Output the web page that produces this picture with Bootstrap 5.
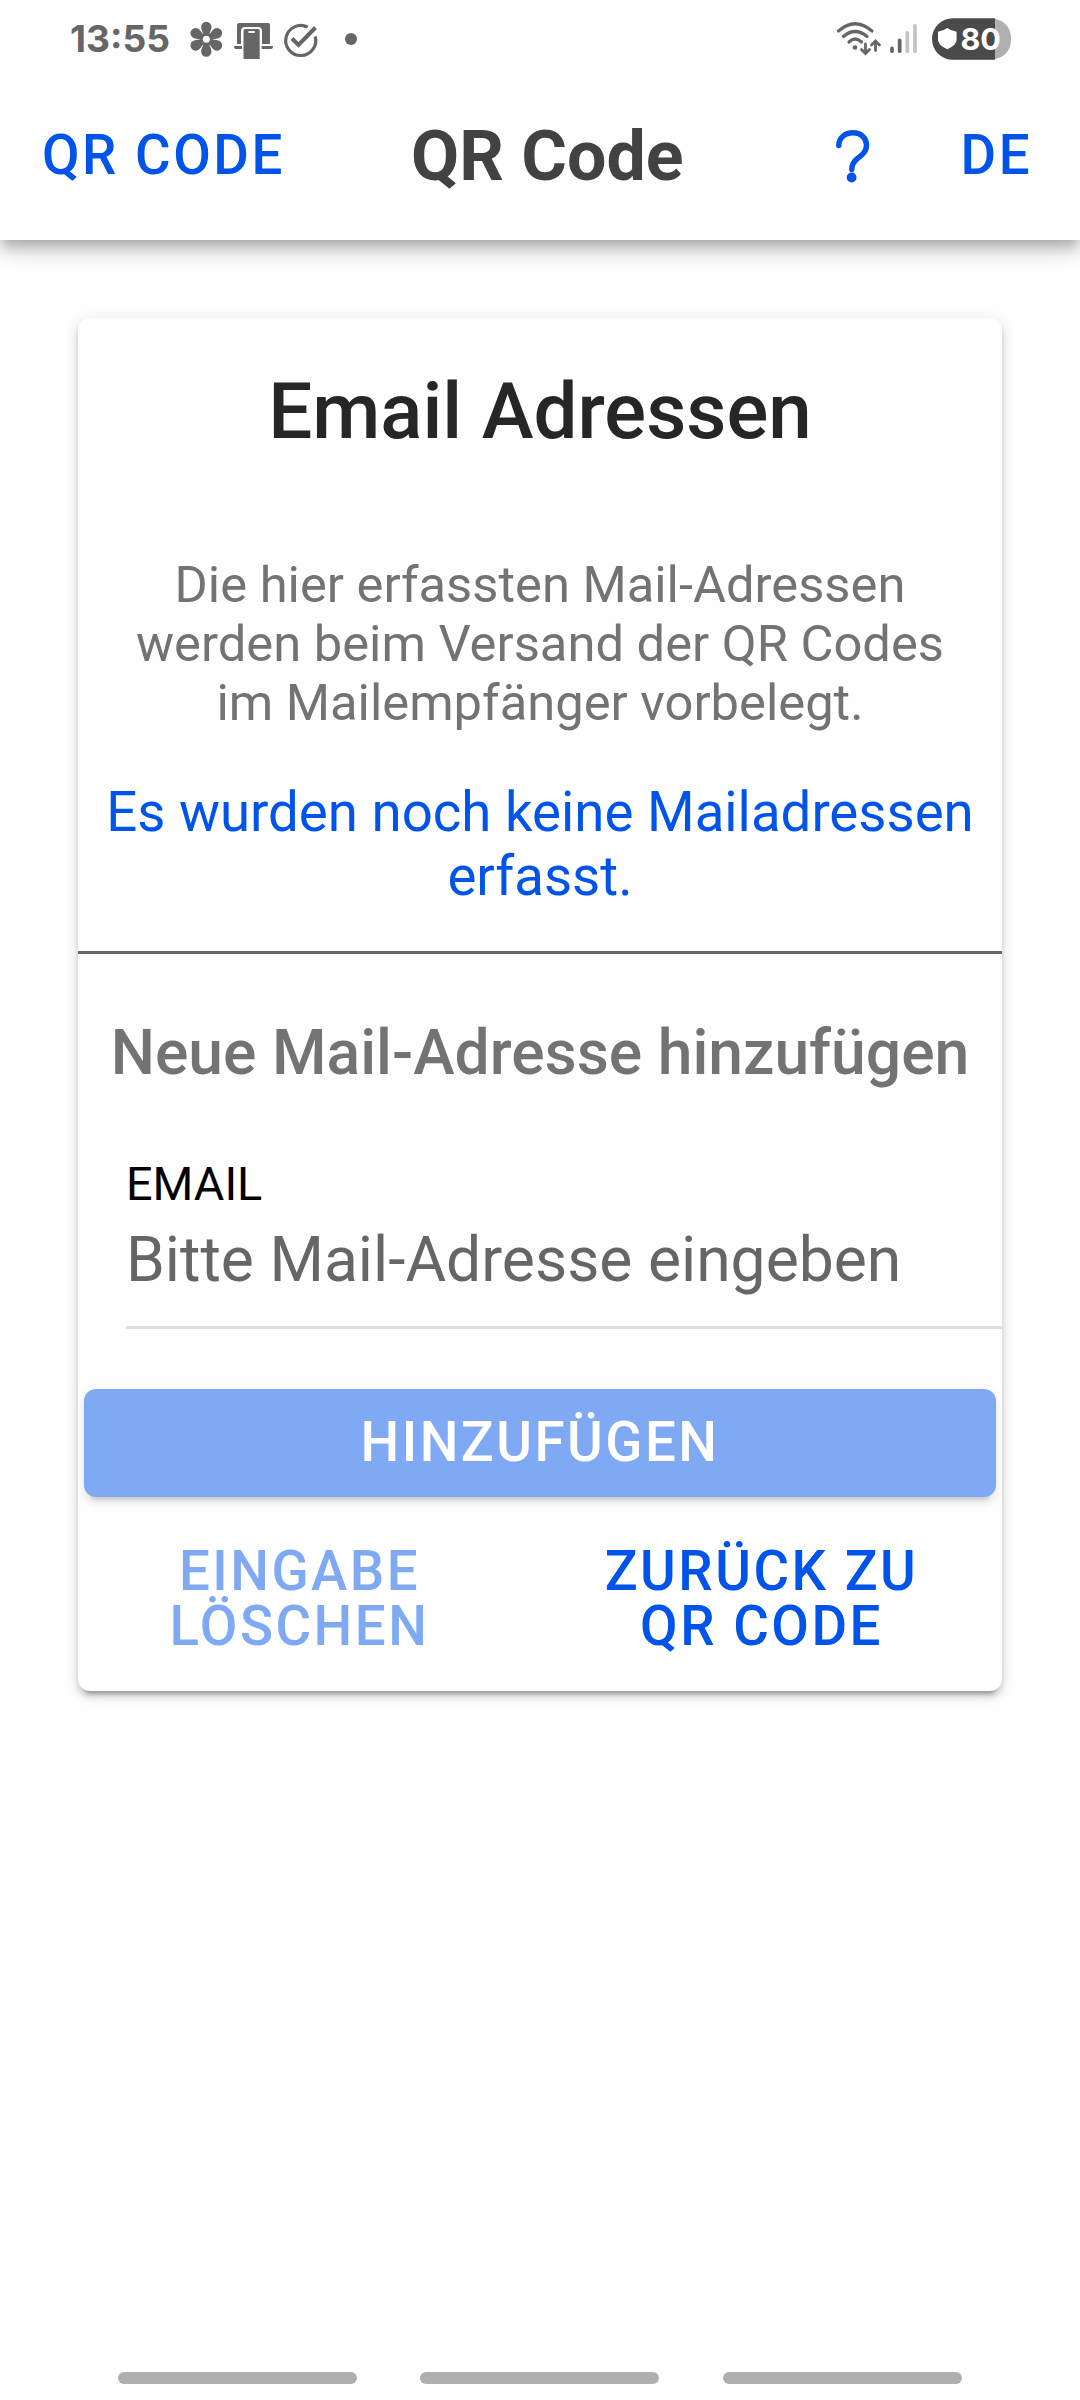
<!DOCTYPE html>
<html lang="de">
<head>
<meta charset="utf-8">
<meta name="viewport" content="width=device-width, initial-scale=1">
<title>QR Code</title>
<link href="https://cdn.jsdelivr.net/npm/bootstrap@5.3.0/dist/css/bootstrap.min.css" rel="stylesheet">
<style>
:root{--blue:#0054e9}
html,body{background:#fefefe}
body{font-family:Roboto,sans-serif;height:2400px;overflow:hidden;color:#737373}
.status-row{height:72px;padding:0 69px 0 70px;color:#666}
.clock{font:700 37.2px/72px Inter,sans-serif;width:113px;margin-top:3px}
.topbar{background:#fefefe;box-shadow:0 6px 12px -3px rgba(0,0,0,.2),0 12px 15px 0 rgba(0,0,0,.14),0 3px 30px 0 rgba(0,0,0,.12)}
.tool-row{height:168px;padding:0 48px 0 42px}
.tool-row .btn{padding-bottom:2px}
.btn.flat{font-weight:500;font-size:54.6px;line-height:55px;letter-spacing:2.5px;color:var(--blue);border:0;padding:0;border-radius:0;white-space:nowrap}
.tool-row .btn.flat{padding-bottom:2px}
.btn.flat:disabled{color:#80a9f4;opacity:1}
.app-title{font-size:69.9px;line-height:84px;font-weight:700;color:#424242;margin:0}
.panel{margin:78px 78px 0;height:1373px;border:0;border-radius:12px;background:#fefefe;box-shadow:0 9px 3px -6px rgba(0,0,0,.2),0 6px 6px 0 rgba(0,0,0,.14),0 3px 15px 0 rgba(0,0,0,.12);padding-top:47px}
.panel h1{font-size:78.1px;line-height:94px;font-weight:500;color:#262626;margin:0}
.intro{font-size:50.7px;line-height:59px;margin:96px 0 0}
.notice{font-size:54.6px;line-height:64px;color:var(--blue);margin:48px 0 43px}
.rule{height:3px;background:#66646b}
.panel h2{font-size:62.4px;line-height:76px;font-weight:500;margin:61px 0 63px;white-space:nowrap}
.field{margin-left:48px;border-bottom:3px solid #dedede;height:175px}
.field label{display:block;font-size:46.8px;line-height:60px;color:#000}
.field input{font-size:62.4px;line-height:74px;height:74px;margin-top:9px;padding:0;border:0;background:none;color:#666;border-radius:0}
.field input::placeholder{color:#666;opacity:1}
.btn.solid{height:108px;margin:60px 6px 0;padding:0 0 2px;border:0;border-radius:12px;background:#80a9f4;color:#fff;font-weight:500;font-size:54.6px;line-height:56px;letter-spacing:2.5px;box-shadow:0 9px 3px -6px rgba(0,0,0,.1),0 6px 6px 0 rgba(0,0,0,.07),0 3px 15px 0 rgba(0,0,0,.06)}
.btn.solid:disabled{background:#80a9f4;color:#fff;opacity:1}
.pair{margin-top:47px}
.pair .btn.flat{padding-right:19px}
.navbars{position:fixed;left:0;right:0;bottom:16px;padding:0 118px}
.navbars span{width:239px;height:12px;border-radius:6px;background:#afafaf}
.navbars span+span{margin-left:63px}
.navbars span:last-child{margin-left:64px}
</style>
<script src="https://cdn.jsdelivr.net/npm/bootstrap@5.3.0/dist/js/bootstrap.bundle.min.js"></script>
</head>
<body>
<header class="topbar">
  <div class="status-row d-flex justify-content-between">
    <div class="d-flex">
      <span class="clock">13:55</span>
      <svg width="180" height="72" viewBox="183 0 180 72" fill="#666">
        <g transform="translate(206.3 39.3)">
          <path id="petal" d="M-1.500-2.500C-3-6-5.200-9.500-5.200-12.300A5.200 5.200 0 0 1 5.200-12.300C5.200-9.500 3-6 1.500-2.500Z"/>
          <use href="#petal" transform="rotate(60)"/><use href="#petal" transform="rotate(120)"/>
          <use href="#petal" transform="rotate(180)"/><use href="#petal" transform="rotate(240)"/><use href="#petal" transform="rotate(300)"/>
          <circle r="5" fill="none" stroke="#666" stroke-width="3"/>
          <circle r="3.500" fill="#fefefe"/>
        </g>
        <path d="M237 44V25q0-2 2-2h29q2 0 2 2v19h-8V31q0-4-4-4h-13q-4 0-4 4v13z"/>
        <path d="M234 46h8v3h-6q-2 0-2-3zM261.700 46H273q0 3-2 3h-9.300z"/>
        <path d="M243.500 59V31q0-2 2-2h12.200q2 0 2 2v28zM248.500 31v2h6.300v-2z" fill-rule="evenodd"/>
        <path d="M307.700 27.200A15 15 0 1 0 315.200 36.500" fill="none" stroke="#666" stroke-width="3.200"/>
        <path d="M292 38.500l6.500 6.500L315.500 27.500" fill="none" stroke="#666" stroke-width="4"/>
        <circle cx="351" cy="39" r="6"/>
      </svg>
    </div>
    <svg width="176" height="72" viewBox="835 0 176 72">
      <g fill="none" stroke="#666" stroke-width="3.200" stroke-linecap="round">
        <path d="M838.500 31Q855 16.500 872 31"/>
        <path d="M843.500 36.500Q855 26.500 867 36.500"/>
        <path d="M849 42Q855 36 861.500 42"/>
        <path d="M865.500 44v9M861.500 49.500l4 4 4-4M875.500 50.500v-9M871.500 45l4-4 4 4" stroke-width="2.800"/>
      </g>
      <circle cx="855" cy="47.500" r="2.300" fill="#666"/>
      <g stroke-width="3.800" stroke-linecap="round">
        <path d="M892 48.500v2.700M899.700 40.500v10.700" stroke="#666"/>
        <path d="M907.300 33v18.200M915 26v25.200" stroke="#c4c4c4"/>
      </g>
      <path d="M995 18.200h-42.200a20.800 20.800 0 0 0 0 41.600H995z" fill="#4a4a4a"/>
      <path d="M995 18.700v40.600q16-4 16-20.300t-16-20.300z" fill="#b0b0b0"/>
      <path d="M947.300 28q4 3 9.300 3.700v8.300q0 5-9.300 9.300-9.300-4.300-9.300-9.300v-8.300q5.300-.7 9.300-3.700z" fill="#fff"/>
      <text x="960.500" y="50" font-family="Inter, sans-serif" font-weight="700" font-size="30.500" fill="#fff">80</text>
    </svg>
  </div>
  <div class="tool-row d-flex align-items-center">
    <button class="btn flat text-start" style="width:369px">QR CODE</button>
    <h1 class="app-title">QR Code</h1>
    <svg class="ms-auto" width="35" height="54" viewBox="834.500 127.500 35 54" aria-label="Hilfe">
      <path d="M838.300 144C838.300 136.500 844.500 131.300 852.500 131.300C861 131.300 866 137 866 143.500C866 150.500 861.500 153.500 857.500 156.500C853 160 851.300 163.500 851.300 168" fill="none" stroke="#0054e9" stroke-width="5.400" stroke-linecap="round"/>
      <circle cx="851.100" cy="176" r="4.900" fill="#0054e9"/>
    </svg>
    <button class="btn flat" style="margin-left:91px">DE</button>
  </div>
</header>

<main class="card panel text-center">
  <h1>Email Adressen</h1>
  <p class="intro">Die hier erfassten Mail-Adressen<br>werden beim Versand der QR Codes<br>im Mailempfänger vorbelegt.</p>
  <p class="notice">Es wurden noch keine Mailadressen<br>erfasst.</p>
  <div class="rule"></div>
  <h2>Neue Mail-Adresse hinzufügen</h2>
  <div class="field text-start">
    <label for="mail">EMAIL</label>
    <input id="mail" class="w-100 d-block" type="email" placeholder="Bitte Mail-Adresse eingeben">
  </div>
  <button class="btn solid" disabled>HINZUFÜGEN</button>
  <div class="pair d-flex">
    <button class="btn flat w-50" disabled>EINGABE<br>LÖSCHEN</button>
    <button class="btn flat w-50">ZURÜCK ZU<br>QR CODE</button>
  </div>
</main>

<div class="navbars d-flex"><span></span><span></span><span></span></div>
</body>
</html>
